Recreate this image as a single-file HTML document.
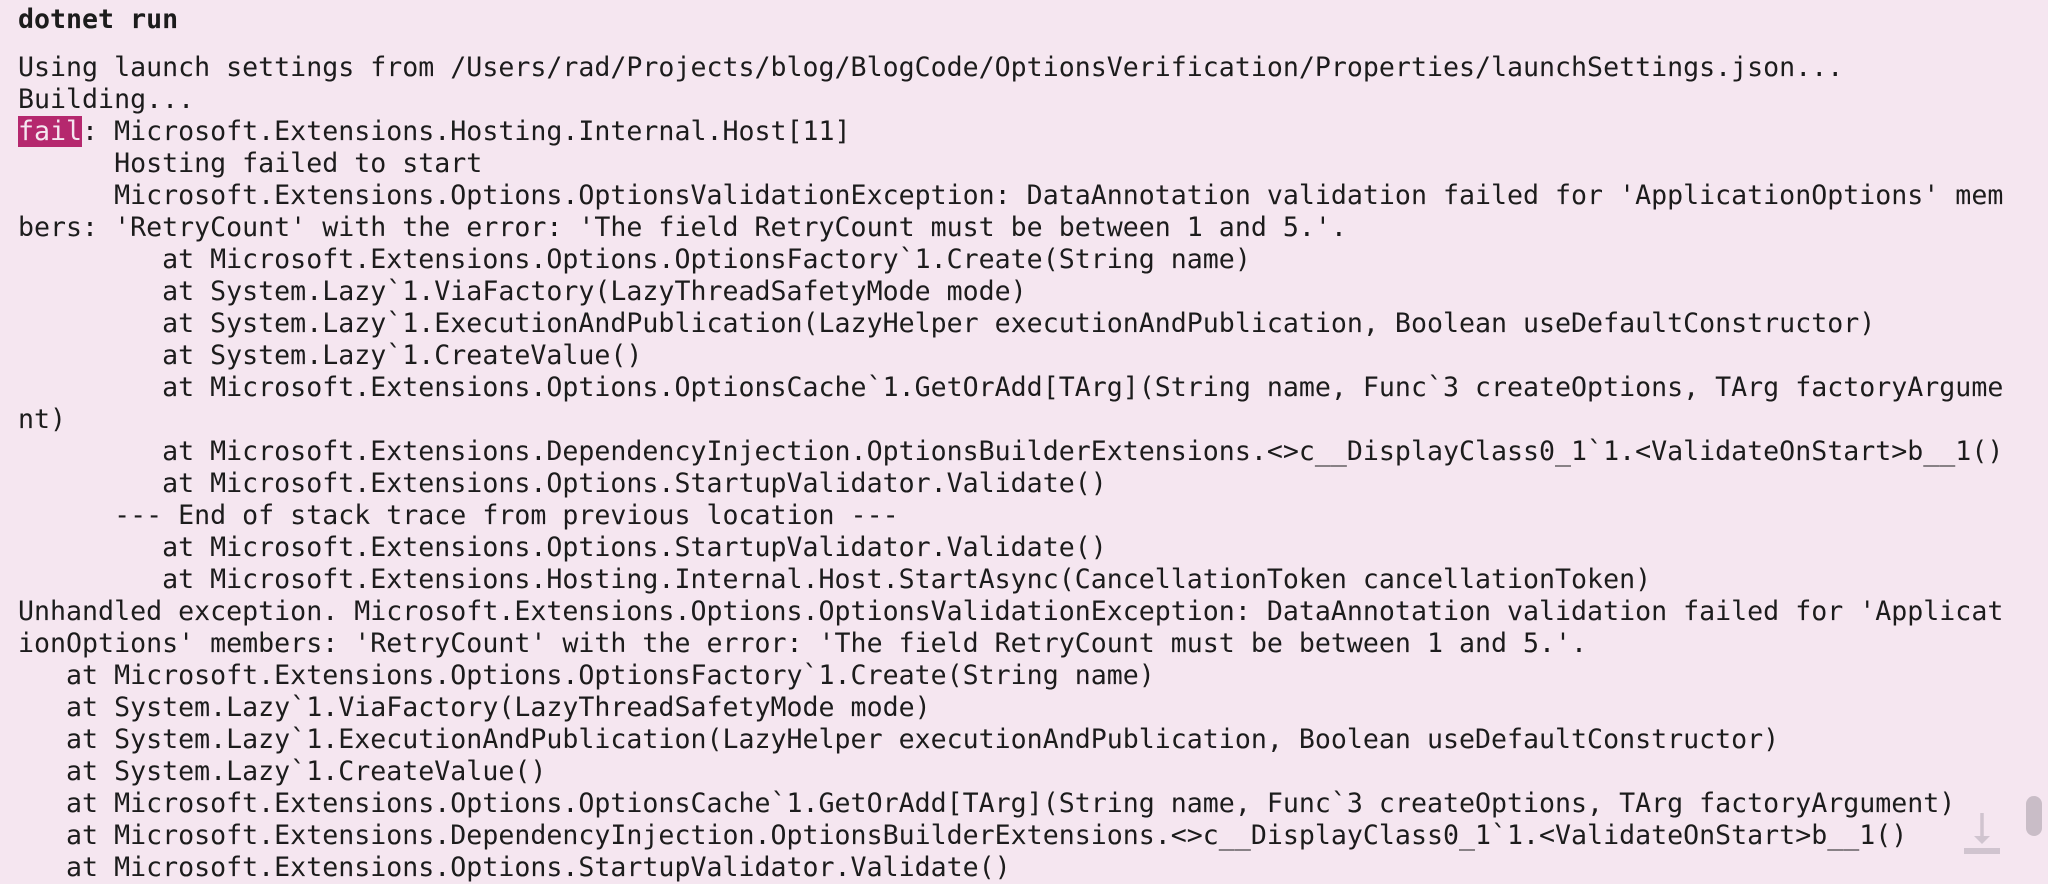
<!DOCTYPE html>
<html><head><meta charset="utf-8"><style>
html,body{margin:0;padding:0;width:2048px;height:876px;overflow:hidden;background:#f5e6f0;}
.t{position:absolute;left:18px;font-family:"DejaVu Sans Mono","Liberation Mono",monospace;font-size:26.6px;line-height:32px;color:#1c1c1c;white-space:pre;margin:0;}
.h{top:4px;font-weight:bold;}
.b{top:52px;}
.f{background:#b5286e;color:#f5e6f0;}
</style></head><body>
<div class="t h">dotnet run</div>
<pre class="t b">Using launch settings from /Users/rad/Projects/blog/BlogCode/OptionsVerification/Properties/launchSettings.json...
Building...
<span class="f">fail</span>: Microsoft.Extensions.Hosting.Internal.Host[11]
      Hosting failed to start
      Microsoft.Extensions.Options.OptionsValidationException: DataAnnotation validation failed for 'ApplicationOptions' mem
bers: 'RetryCount' with the error: 'The field RetryCount must be between 1 and 5.'.
         at Microsoft.Extensions.Options.OptionsFactory`1.Create(String name)
         at System.Lazy`1.ViaFactory(LazyThreadSafetyMode mode)
         at System.Lazy`1.ExecutionAndPublication(LazyHelper executionAndPublication, Boolean useDefaultConstructor)
         at System.Lazy`1.CreateValue()
         at Microsoft.Extensions.Options.OptionsCache`1.GetOrAdd[TArg](String name, Func`3 createOptions, TArg factoryArgume
nt)
         at Microsoft.Extensions.DependencyInjection.OptionsBuilderExtensions.&lt;&gt;c__DisplayClass0_1`1.&lt;ValidateOnStart&gt;b__1()
         at Microsoft.Extensions.Options.StartupValidator.Validate()
      --- End of stack trace from previous location ---
         at Microsoft.Extensions.Options.StartupValidator.Validate()
         at Microsoft.Extensions.Hosting.Internal.Host.StartAsync(CancellationToken cancellationToken)
Unhandled exception. Microsoft.Extensions.Options.OptionsValidationException: DataAnnotation validation failed for 'Applicat
ionOptions' members: 'RetryCount' with the error: 'The field RetryCount must be between 1 and 5.'.
   at Microsoft.Extensions.Options.OptionsFactory`1.Create(String name)
   at System.Lazy`1.ViaFactory(LazyThreadSafetyMode mode)
   at System.Lazy`1.ExecutionAndPublication(LazyHelper executionAndPublication, Boolean useDefaultConstructor)
   at System.Lazy`1.CreateValue()
   at Microsoft.Extensions.Options.OptionsCache`1.GetOrAdd[TArg](String name, Func`3 createOptions, TArg factoryArgument)
   at Microsoft.Extensions.DependencyInjection.OptionsBuilderExtensions.&lt;&gt;c__DisplayClass0_1`1.&lt;ValidateOnStart&gt;b__1()
   at Microsoft.Extensions.Options.StartupValidator.Validate()</pre>
<svg style="position:absolute;left:1960px;top:810px" width="44" height="48" viewBox="0 0 44 48">
<path d="M22 3 V32" stroke="#d0c4cf" stroke-width="3.5" fill="none"/>
<path d="M14 26 L22 34 L30 26 Z" fill="#d0c4cf"/>
<rect x="4" y="38" width="36" height="6" fill="#d0c4cf"/>
</svg>
<div style="position:absolute;left:2026px;top:796px;width:16px;height:40px;border-radius:8px;background:#c9bdc7"></div>
</body></html>
